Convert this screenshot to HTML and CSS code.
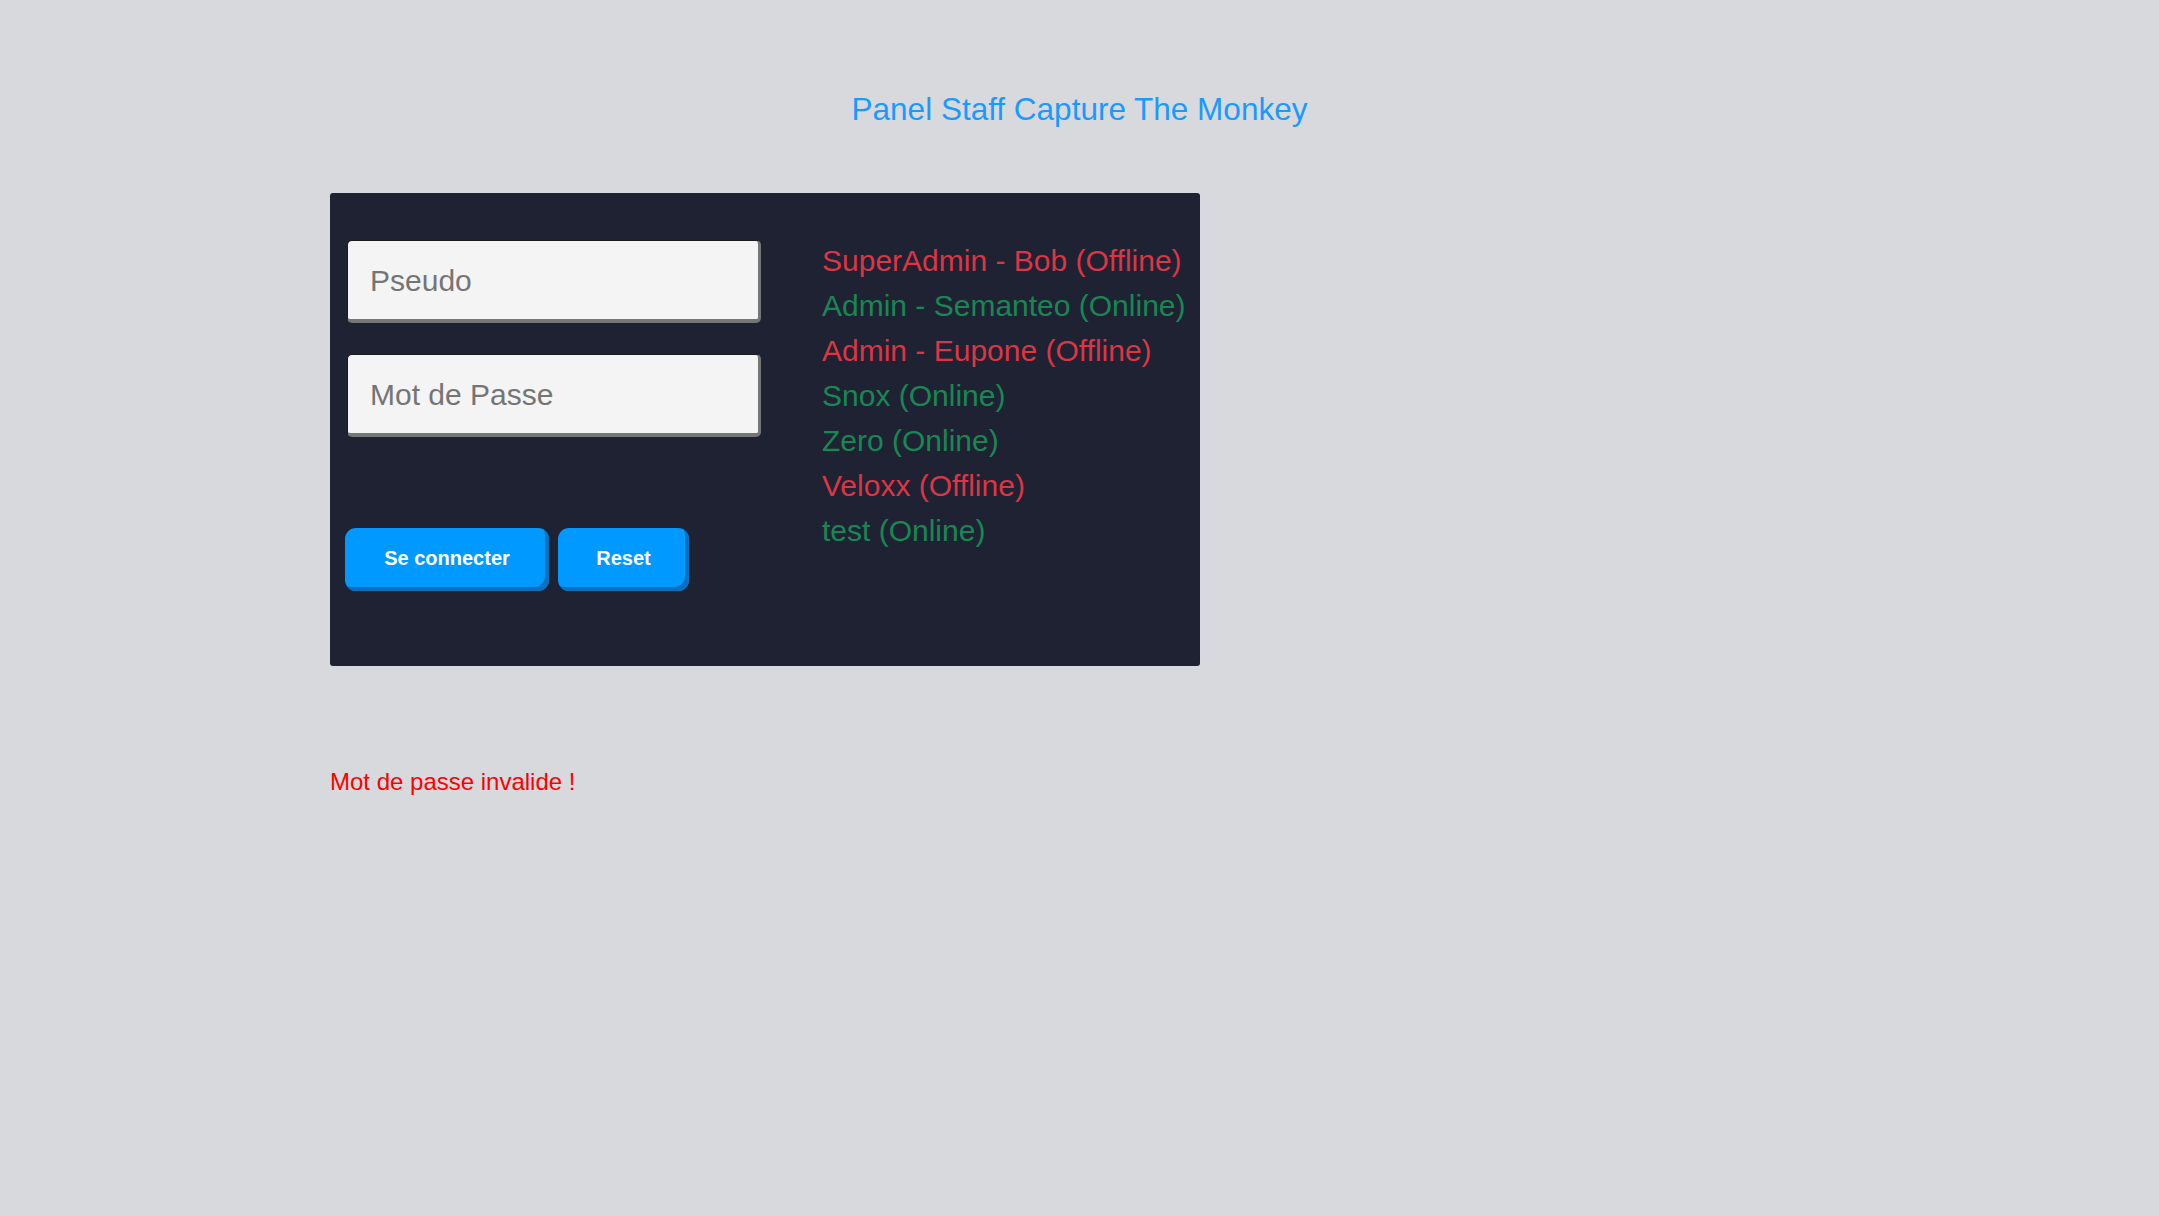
FILE: index.html
```html
<!DOCTYPE html>
<html lang="fr">
<head>
<meta charset="utf-8">
<title>Panel Staff Capture The Monkey</title>
<link rel="stylesheet" href="styles.css">
</head>
<body>
<h1 class="title">Panel Staff Capture The Monkey</h1>
<main class="content">
  <section class="panel">
    <form class="login">
      <input class="field" type="text" placeholder="Pseudo">
      <input class="field" type="password" placeholder="Mot de Passe">
      <div class="actions">
        <button class="btn btn-login" type="button">Se connecter</button>
        <button class="btn btn-reset" type="reset">Reset</button>
      </div>
    </form>
    <ul class="staff">
      <li class="off">SuperAdmin - Bob (Offline)</li>
      <li class="on">Admin - Semanteo (Online)</li>
      <li class="off">Admin - Eupone (Offline)</li>
      <li class="on">Snox (Online)</li>
      <li class="on">Zero (Online)</li>
      <li class="off">Veloxx (Offline)</li>
      <li class="on">test (Online)</li>
    </ul>
  </section>
  <p class="error">Mot de passe invalide !</p>
</main>
</body>
</html>
```

FILE: styles.css
```css
html, body {
  margin: 0;
  padding: 0;
  background: #d8d9dd;
  font-family: "Liberation Sans", Arial, sans-serif;
}

.title {
  margin: 0;
  padding-top: 91px;
  font-size: 31.5px;
  line-height: 36px;
  font-weight: normal;
  text-align: center;
  color: #1a9aff;
}

.content {
  padding-left: 330px;
  padding-top: 66px;
}

.panel {
  box-sizing: border-box;
  width: 870px;
  height: 473px;
  background: #1e2232;
  border-radius: 3px;
  display: flex;
  padding-left: 15px;
}

.login {
  display: flex;
  flex-direction: column;
  width: 416px;
  padding-top: 47px;
}

.field {
  box-sizing: border-box;
  width: 414px;
  height: 83px;
  margin: 0 0 31px 2px;
  padding: 2px 0 0 22px;
  background: #f4f4f4;
  border-style: solid;
  border-color: #1a1a1a #767676 #767676 #1a1a1a;
  border-width: 1px 3px 4px 1px;
  border-radius: 5px;
  font-family: "Liberation Sans", Arial, sans-serif;
  font-size: 30px;
  color: #333;
  outline: none;
}

.field::placeholder {
  color: #757575;
}

.actions {
  display: flex;
  gap: 9px;
  margin-top: 60px;
}

.btn {
  box-sizing: border-box;
  height: 63px;
  background: #0099ff;
  border: none;
  border-radius: 11px;
  box-shadow: inset -4px -4px 0 #0a70bd;
  padding: 0 0 3px 0;
  color: #fff;
  font-family: "Liberation Sans", Arial, sans-serif;
  font-weight: bold;
  font-size: 20px;
  cursor: pointer;
}

.btn-login { width: 204px; }
.btn-reset { width: 131px; }

.staff {
  list-style: none;
  margin: 0;
  padding: 45px 0 0 61px;
  font-size: 30px;
  line-height: 45px;
}

.staff .off { color: #dc3545; }
.staff .on { color: #198754; }

.error {
  margin: 102px 0 0 0;
  font-size: 24px;
  color: #ff0000;
}
```
